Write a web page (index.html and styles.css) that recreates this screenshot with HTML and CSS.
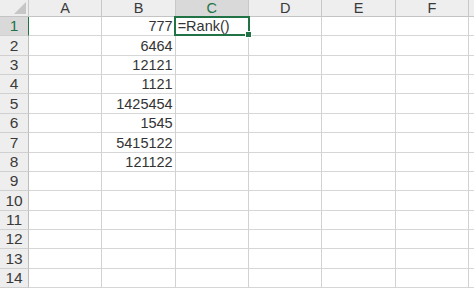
FILE: index.html
```html
<!DOCTYPE html>
<html lang="en">
<head>
    <meta charset="UTF-8">
    <meta name="viewport" content="width=device-width, initial-scale=1.0">
    <title>Book1 - Sheet1</title>
    <link rel="stylesheet" href="styles.css">
</head>
<body>
<div class="sheet">
  <table class="grid">
    <colgroup>
      <col class="col-head">
      <col class="col"><col class="col"><col class="col">
      <col class="col"><col class="col"><col class="col">
      <col class="col">
    </colgroup>
    <thead>
      <tr>
        <th class="corner"><span class="select-all"></span></th>
        <th>A</th>
        <th>B</th>
        <th class="current">C</th>
        <th>D</th>
        <th>E</th>
        <th>F</th>
        <th></th>
      </tr>
    </thead>
    <tbody>
      <tr><th class="current">1</th><td></td><td class="num">777</td><td class="selected">=Rank()</td><td></td><td></td><td></td><td></td></tr>
      <tr><th>2</th><td></td><td class="num">6464</td><td></td><td></td><td></td><td></td><td></td></tr>
      <tr><th>3</th><td></td><td class="num">12121</td><td></td><td></td><td></td><td></td><td></td></tr>
      <tr><th>4</th><td></td><td class="num">1121</td><td></td><td></td><td></td><td></td><td></td></tr>
      <tr><th>5</th><td></td><td class="num">1425454</td><td></td><td></td><td></td><td></td><td></td></tr>
      <tr><th>6</th><td></td><td class="num">1545</td><td></td><td></td><td></td><td></td><td></td></tr>
      <tr><th>7</th><td></td><td class="num">5415122</td><td></td><td></td><td></td><td></td><td></td></tr>
      <tr><th>8</th><td></td><td class="num">121122</td><td></td><td></td><td></td><td></td><td></td></tr>
      <tr><th>9</th><td></td><td></td><td></td><td></td><td></td><td></td><td></td></tr>
      <tr><th>10</th><td></td><td></td><td></td><td></td><td></td><td></td><td></td></tr>
      <tr><th>11</th><td></td><td></td><td></td><td></td><td></td><td></td><td></td></tr>
      <tr><th>12</th><td></td><td></td><td></td><td></td><td></td><td></td><td></td></tr>
      <tr><th>13</th><td></td><td></td><td></td><td></td><td></td><td></td><td></td></tr>
      <tr><th>14</th><td></td><td></td><td></td><td></td><td></td><td></td><td></td></tr>
    </tbody>
  </table>
</div>
</body>
</html>
```

FILE: styles.css
```css
body {
    margin: 0;
    background: #fff;
    font-family: "Liberation Sans", Arial, sans-serif;
    color: #333;
}

.sheet {
    width: 474px;
    height: 293px;
    overflow: hidden;
}

.grid {
    border-collapse: separate;
    border-spacing: 0;
    table-layout: fixed;
    width: 542px;
    font-size: 14.5px;
}

.col-head {
    width: 29px;
}

.col {
    width: 73.33px;
}

.grid th,
.grid td {
    box-sizing: border-box;
    border-right: 1px solid #d2d2d2;
    border-bottom: 1px solid #d6d6d6;
    padding: 0 2px;
    white-space: nowrap;
    overflow: visible;
}

/* column letters */
.grid thead tr {
    height: 17px;
}

.grid thead th {
    background: #eeeeee;
    color: #3a3a3a;
    font-weight: normal;
    font-size: 14.5px;
    line-height: 15px;
    text-align: center;
    vertical-align: bottom;
    border-right-color: #c8c8c8;
    border-bottom-color: #c4c4c4;
}

.grid thead th.current {
    background: #d9d9d9;
    color: #217346;
    border-bottom: 1px solid #217346;
}

.corner {
    position: relative;
}

.select-all {
    position: absolute;
    right: 2px;
    bottom: 2px;
    width: 0;
    height: 0;
    border-left: 12px solid transparent;
    border-bottom: 12px solid #c6c6c6;
}

/* row numbers */
.grid tbody tr {
    height: 19.36px;
}

.grid tbody th {
    background: #eeeeee;
    color: #3a3a3a;
    font-weight: normal;
    font-size: 15.5px;
    line-height: 17px;
    text-align: center;
    vertical-align: bottom;
    padding: 0 0 1px;
    border-right-color: #bdbdbd;
    border-bottom-color: #d0d0d0;
}

.grid tbody th.current {
    background: #d9d9d9;
    color: #217346;
    border-right: 1px solid #217346;
}

.grid td {
    vertical-align: bottom;
    padding-bottom: 1px;
}

.num {
    text-align: right;
}

.selected {
    position: relative;
    padding-left: 5px;
}

.selected::after {
    content: '';
    position: absolute;
    top: -1px;
    left: -2px;
    right: -2px;
    bottom: -1px;
    border: 2px solid #217346;
}

.selected::before {
    content: '';
    position: absolute;
    right: -4px;
    bottom: -3px;
    width: 5px;
    height: 5px;
    background: #217346;
    border: 1px solid #fff;
    z-index: 1;
}
```
